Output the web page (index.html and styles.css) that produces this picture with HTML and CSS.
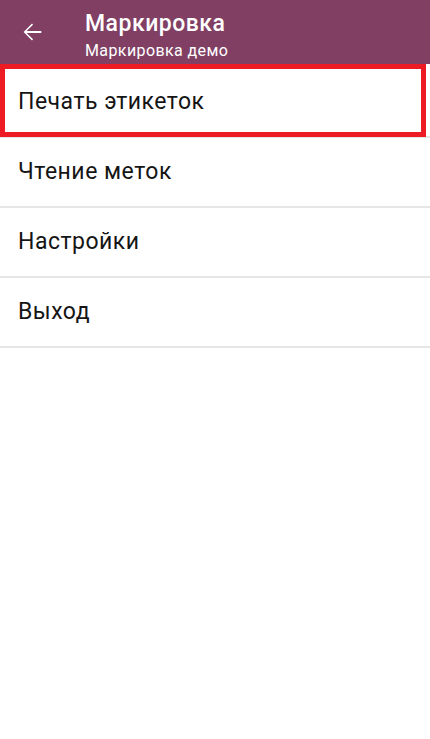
FILE: index.html
```html
<!DOCTYPE html>
<html lang="ru">
<head>
<meta charset="utf-8">
<link rel="stylesheet" href="styles.css">
</head>
<body>
<header class="toolbar">
  <div class="back">
    <svg width="28" height="28" viewBox="0 0 24 24"><path fill="#fff" d="M20 11.2H7.4l5.5-5.5L12 4.8 4.8 12l7.2 7.2 0.9-0.9-5.5-5.5H20z"/></svg>
  </div>
  <div class="titles">
    <div class="title">Маркировка</div>
    <div class="subtitle">Маркировка демо</div>
  </div>
</header>
<main class="menu">
  <div class="item">Печать этикеток</div>
  <div class="item">Чтение меток</div>
  <div class="item">Настройки</div>
  <div class="item">Выход</div>
  <div class="highlight"></div>
</main>
</body>
</html>
```

FILE: styles.css
```css
html, body {
  margin: 0;
  padding: 0;
  background: #fff;
  font-family: Roboto, "Noto Sans", sans-serif;
}
.toolbar {
  height: 64px;
  background: #803f63;
  display: flex;
  color: #fff;
}
.back {
  width: 28px;
  height: 28px;
  margin: 18px 39px 0 18px;
}
.back svg { display: block; }
.titles {
  display: flex;
  flex-direction: column;
  gap: 4px;
  padding-top: 11px;
}
.title {
  font-size: 23px;
  font-weight: 500;
  line-height: 26px;
  letter-spacing: 0.5px;
}
.subtitle {
  font-size: 16px;
  line-height: 20px;
  letter-spacing: 0.4px;
}
.menu {
  position: relative;
  padding-top: 4px;
}
.item {
  height: 68px;
  line-height: 68px;
  border-bottom: 2px solid #e6e6e6;
  padding-left: 18px;
  font-size: 23px;
  letter-spacing: 0.5px;
  color: #151515;
}
.highlight {
  position: absolute;
  left: 0;
  top: 0;
  width: 426px;
  height: 73px;
  border: 5px solid #ed1c24;
  box-sizing: border-box;
}
```
